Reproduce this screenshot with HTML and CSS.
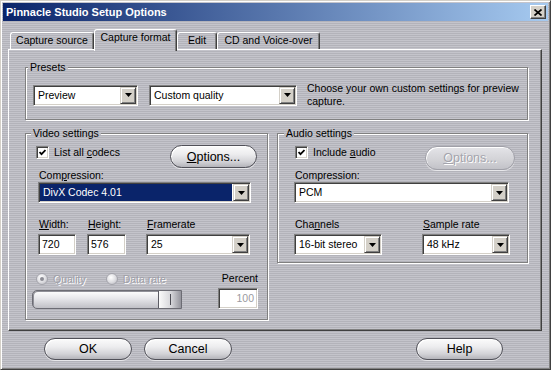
FILE: index.html
```html
<!DOCTYPE html>
<html lang="en">

<head>
  <meta charset="UTF-8">
  <title>Pinnacle Studio Setup Options</title>
  <link rel="stylesheet" href="styles.css">
</head>

<body>

  <div class="window">
    <div class="titlebar">
      <span>Pinnacle Studio Setup Options</span>
      <span class="close">
        <svg width="8" height="7" viewBox="0 0 8 7"><path d="M0.5 0.5 L7.5 6.5 M7.5 0.5 L0.5 6.5" stroke="#000" stroke-width="1.7"/></svg>
      </span>
    </div>

    <div class="tabs">
      <div class="tab tab-source">Capture source</div>
      <div class="tab tab-format active">Capture format</div>
      <div class="tab tab-edit">Edit</div>
      <div class="tab tab-cd">CD and Voice-over</div>
    </div>

    <div class="panel">
      <!-- Presets -->
      <fieldset class="group presets">
        <legend>Presets</legend>
        <div class="group-body">
          <div class="combo combo-preview">
            <span class="value">Preview</span>
            <span class="drop"><svg width="7" height="4" viewBox="0 0 7 4"><polygon points="0,0 7,0 3.5,4" fill="#000"/></svg></span>
          </div>
          <div class="combo combo-quality">
            <span class="value">Custom quality</span>
            <span class="drop"><svg width="7" height="4" viewBox="0 0 7 4"><polygon points="0,0 7,0 3.5,4" fill="#000"/></svg></span>
          </div>
          <p class="hint">Choose your own custom settings for preview capture.</p>
        </div>
      </fieldset>

      <div class="columns">
        <!-- Video -->
        <fieldset class="group video">
          <legend>Video settings</legend>
          <div class="group-body">
            <div class="check-row">
              <span class="checkbox"><svg width="7" height="7" viewBox="0 0 7 7"><path d="M0.5 3 L2.5 5.2 L6.5 1" stroke="#000" stroke-width="1.8" fill="none"/></svg></span>
              <span class="check-label">List all <u>c</u>odecs</span>
              <span class="pill pill-video"><u>O</u>ptions...</span>
            </div>
            <div class="field-label">Com<u>p</u>ression:</div>
            <div class="combo combo-codec">
              <span class="value selected">DivX Codec 4.01</span>
              <span class="drop"><svg width="7" height="4" viewBox="0 0 7 4"><polygon points="0,0 7,0 3.5,4" fill="#000"/></svg></span>
            </div>

            <div class="size-row">
              <div class="field field-width">
                <div class="field-label"><u>W</u>idth:</div>
                <div class="textbox">720</div>
              </div>
              <div class="field field-height">
                <div class="field-label"><u>H</u>eight:</div>
                <div class="textbox">576</div>
              </div>
              <div class="field field-rate">
                <div class="field-label"><u>F</u>ramerate</div>
                <div class="combo">
                  <span class="value">25</span>
                  <span class="drop"><svg width="7" height="4" viewBox="0 0 7 4"><polygon points="0,0 7,0 3.5,4" fill="#000"/></svg></span>
                </div>
              </div>
            </div>

            <div class="rate-row">
              <div class="rate-left">
                <div class="radios">
                  <span class="radio on"></span><span class="disabled radio-text">Quality</span>
                  <span class="radio radio-second"></span><span class="disabled radio-text">Data rate</span>
                </div>
                <div class="slider"><span class="thumb"></span></div>
              </div>
              <div class="percent">
                <div class="percent-label">Percent</div>
                <div class="textbox textbox-off">100</div>
              </div>
            </div>
          </div>
        </fieldset>

        <!-- Audio -->
        <fieldset class="group audio">
          <legend>Audio settings</legend>
          <div class="group-body">
            <div class="check-row">
              <span class="checkbox"><svg width="7" height="7" viewBox="0 0 7 7"><path d="M0.5 3 L2.5 5.2 L6.5 1" stroke="#000" stroke-width="1.8" fill="none"/></svg></span>
              <span class="check-label">Include <u>a</u>udio</span>
              <span class="pill pill-audio pill-off"><u>O</u>ptions...</span>
            </div>
            <div class="field-label">Compression:</div>
            <div class="combo combo-pcm">
              <span class="value">PCM</span>
              <span class="drop"><svg width="7" height="4" viewBox="0 0 7 4"><polygon points="0,0 7,0 3.5,4" fill="#000"/></svg></span>
            </div>

            <div class="size-row">
              <div class="field field-channels">
                <div class="field-label">Cha<u>n</u>nels</div>
                <div class="combo">
                  <span class="value">16-bit stereo</span>
                  <span class="drop"><svg width="7" height="4" viewBox="0 0 7 4"><polygon points="0,0 7,0 3.5,4" fill="#000"/></svg></span>
                </div>
              </div>
              <div class="field field-sample">
                <div class="field-label"><u>S</u>ample rate</div>
                <div class="combo">
                  <span class="value">48 kHz</span>
                  <span class="drop"><svg width="7" height="4" viewBox="0 0 7 4"><polygon points="0,0 7,0 3.5,4" fill="#000"/></svg></span>
                </div>
              </div>
            </div>
          </div>
        </fieldset>
      </div>
    </div>

    <div class="buttons">
      <span class="pill pill-ok">OK</span>
      <span class="pill pill-cancel">Cancel</span>
      <span class="pill pill-help">Help</span>
    </div>
  </div>

</body>

</html>
```

FILE: styles.css
```css
body {
  margin: 0;
  font-family: "Liberation Sans", Arial, sans-serif;
  font-size: 10.5px;
  color: #000;
}

/* striped dialog background, fixed so every piece lines up */
body,
.tab.active,
.group legend {
  background-color: #bcbcc3;
  background-image: repeating-linear-gradient(to bottom, #c4c4cb 0, #c4c4cb 1px, #b3b3ba 1px, #b3b3ba 2px);
  background-attachment: fixed;
}

.window {
  width: 551px;
  height: 370px;
  box-sizing: border-box;
  padding: 2px;
  border: 1px solid;
  border-color: #d4d0c8 #404040 #404040 #d4d0c8;
  box-shadow: inset 1px 1px #fff, inset -1px -1px #808080;
}

.titlebar {
  display: flex;
  justify-content: space-between;
  align-items: center;
  height: 18px;
  padding: 0 2px 0 3px;
  background: linear-gradient(to right, #0a246a, #a6caf0);
  color: #fff;
  font-size: 11px;
  font-weight: bold;
}

.close {
  width: 16px;
  height: 14px;
  box-sizing: border-box;
  display: flex;
  align-items: center;
  justify-content: center;
  background: #d4d0c8;
  border: 1px solid;
  border-color: #fff #404040 #404040 #fff;
  box-shadow: inset -1px -1px #808080;
}

/* tabs */

.tabs {
  display: flex;
  align-items: flex-end;
  height: 20px;
  margin: 8px 0 0 7px;
}

.tab {
  box-sizing: border-box;
  height: 17px;
  padding-top: 1px;
  line-height: 13px;
  text-align: center;
  border: 1px solid;
  border-bottom: 0;
  border-color: #fff #404040 transparent #fff;
  border-radius: 3px 3px 0 0;
  box-shadow: inset -1px 0 #808080;
}

.tab.active {
  position: relative;
  z-index: 1;
  height: 22px;
  margin-bottom: -2px;
}

.tab-source { width: 84px; }
.tab-format { width: 83px; }
.tab-edit { width: 40px; }
.tab-cd { width: 103px; }

.panel {
  box-sizing: border-box;
  width: 534px;
  height: 282px;
  margin-left: 5px;
  padding: 11px 13px 0 16px;
  border: 1px solid;
  border-color: #fff #404040 #404040 #fff;
  box-shadow: inset -1px -1px #808080;
}

/* group boxes */

.group {
  margin: 0;
  padding: 0;
  min-width: 0;
  border: 1px solid #808080;
  box-shadow: 1px 1px #fff, inset 1px 1px #fff;
}

.group legend {
  padding: 0 2px;
  line-height: 13px;
}

.presets legend { margin-left: 2px; }
.video legend { margin-left: 5px; }
.audio legend { margin-left: 6px; }

.presets .group-body {
  display: flex;
  align-items: center;
  padding: 8px 0 11px 7px;
}

.presets .combo { flex-shrink: 0; }

.hint {
  margin: 0 0 0 10px;
  line-height: 13px;
}

.columns {
  display: flex;
  align-items: flex-start;
  gap: 9px;
  margin-top: 7px;
}

.video { width: 243px; box-sizing: border-box; }
.audio { width: 251px; box-sizing: border-box; }

.video .group-body { padding: 6px 0 10px 11px; }
.audio .group-body { padding: 6px 0 7px 16px; }

.check-row {
  display: flex;
  align-items: flex-start;
  height: 23px;
}

.check-label {
  margin-left: 5px;
  line-height: 13px;
}

.checkbox {
  width: 13px;
  height: 13px;
  box-sizing: border-box;
  display: flex;
  align-items: center;
  justify-content: center;
  background: #fff;
  border: 1px solid;
  border-color: #808080 #fff #fff #808080;
  box-shadow: inset 1px 1px #404040, inset -1px -1px #d4d0c8;
}

.video .checkbox { margin-left: -1px; }
.audio .checkbox { margin-left: 1px; }

.field-label {
  line-height: 13px;
  padding-left: 1px;
  white-space: nowrap;
}

.video .group-body > .field-label { padding-left: 2px; }

/* combo boxes and text boxes */

.combo {
  box-sizing: border-box;
  height: 21px;
  display: flex;
  align-items: center;
  padding: 1px;
  background: #fff;
  border: 1px solid;
  border-color: #808080 #fff #fff #808080;
  box-shadow: inset 1px 1px #404040, inset -1px -1px #d4d0c8;
}

.combo .value {
  flex: 1;
  padding-left: 3px;
  line-height: 17px;
  white-space: nowrap;
  overflow: hidden;
}

.combo .value.selected {
  margin-right: 1px;
  background: #0a246a;
  color: #fff;
}

.drop {
  width: 16px;
  height: 17px;
  flex-shrink: 0;
  box-sizing: border-box;
  display: flex;
  align-items: center;
  justify-content: center;
  background: #d4d0c8;
  border: 1px solid;
  border-color: #d4d0c8 #404040 #404040 #d4d0c8;
  box-shadow: inset 1px 1px #fff, inset -1px -1px #808080;
}

.combo-preview { width: 105px; }
.combo-quality { width: 148px; margin-left: 11px; }
.combo-codec { width: 213px; margin-left: 1px; }
.combo-pcm { width: 215px; }

.textbox {
  box-sizing: border-box;
  height: 21px;
  padding: 0 3px;
  line-height: 19px;
  background: #fff;
  border: 1px solid;
  border-color: #808080 #fff #fff #808080;
  box-shadow: inset 1px 1px #404040, inset -1px -1px #d4d0c8;
}

.textbox-off {
  color: #9a9aa0;
  text-align: right;
}

.size-row {
  display: flex;
  margin-top: 15px;
}

.size-row .field-label { margin-bottom: 3px; }

.field-width { width: 38px; margin-left: 1px; }
.field-height { width: 39px; margin-left: 11px; }
.field-rate { width: 104px; margin-left: 20px; }
.field-channels { width: 88px; }
.field-sample { width: 88px; margin-left: 40px; }

/* quality / data rate */

.rate-row {
  display: flex;
  margin-top: 17px;
}

.rate-left {
  width: 150px;
  margin-left: -5px;
}

.radios {
  display: flex;
  align-items: center;
  height: 13px;
  padding-left: 4px;
}

.radio {
  position: relative;
  width: 12px;
  height: 12px;
  box-sizing: border-box;
  border-radius: 50%;
  border: 1px solid #a4a4ac;
  background: radial-gradient(circle at 40% 35%, #ffffff, #dcdce0 55%, #b0b0b6);
}

.radio.on::after {
  content: "";
  position: absolute;
  left: 3px;
  top: 3px;
  width: 4px;
  height: 4px;
  border-radius: 50%;
  background: #8c8c94;
}

.radio-second { margin-left: 20px; }

.radio-text { margin-left: 5px; }

.disabled {
  color: #a0a0a8;
  text-shadow: 1px 1px #fff;
}

.slider {
  display: flex;
  justify-content: flex-end;
  box-sizing: border-box;
  height: 19px;
  margin-top: 5px;
  border: 1px solid #6c6c74;
  border-radius: 5px 0 0 5px;
  background: linear-gradient(to bottom, #ffffff 0%, #e6e6ea 45%, #c0c0c6 100%);
  box-shadow: inset 1px 1px #909098;
}

.thumb {
  width: 23px;
  box-sizing: border-box;
  display: flex;
  align-items: center;
  justify-content: center;
  border-left: 1px solid #5c5c64;
  background: linear-gradient(to right, #fafafa, #d6d6da 55%, #94949c);
}

.thumb::after {
  content: "";
  width: 1px;
  height: 11px;
  background: #4c4c54;
}

.percent {
  width: 40px;
  margin-left: 36px;
}

.percent-label {
  line-height: 13px;
  text-align: right;
  margin-bottom: 3px;
}

/* rounded buttons */

.pill {
  box-sizing: border-box;
  height: 23px;
  display: flex;
  align-items: center;
  justify-content: center;
  border: 1px solid #505058;
  border-radius: 12px;
  background: linear-gradient(to bottom, #fbfbfb 0%, #ececee 40%, #d2d2d6 75%, #b4b4ba 100%);
  box-shadow: inset 1px 1px #fff, 0 1px rgba(255, 255, 255, 0.6);
  font-size: 12.5px;
}

.pill-video { width: 87px; margin: -1px 10px 0 auto; }
.pill-audio { width: 90px; height: 24px; margin: 0 12px 0 auto; }

.pill-off {
  border-color: #a0a0a8;
  color: #a4a4ac;
  text-shadow: 1px 1px #fff;
  background: linear-gradient(to bottom, #e4e4e8 0%, #d2d2d6 60%, #c2c2c8 100%);
}

.buttons {
  display: flex;
  margin-top: 7px;
  padding: 0 45px 0 41px;
}

.buttons .pill { height: 22px; border-radius: 11px; }

.pill-ok { width: 88px; }
.pill-cancel { width: 88px; margin-left: 12px; }
.pill-help { width: 87px; margin-left: auto; }
```
